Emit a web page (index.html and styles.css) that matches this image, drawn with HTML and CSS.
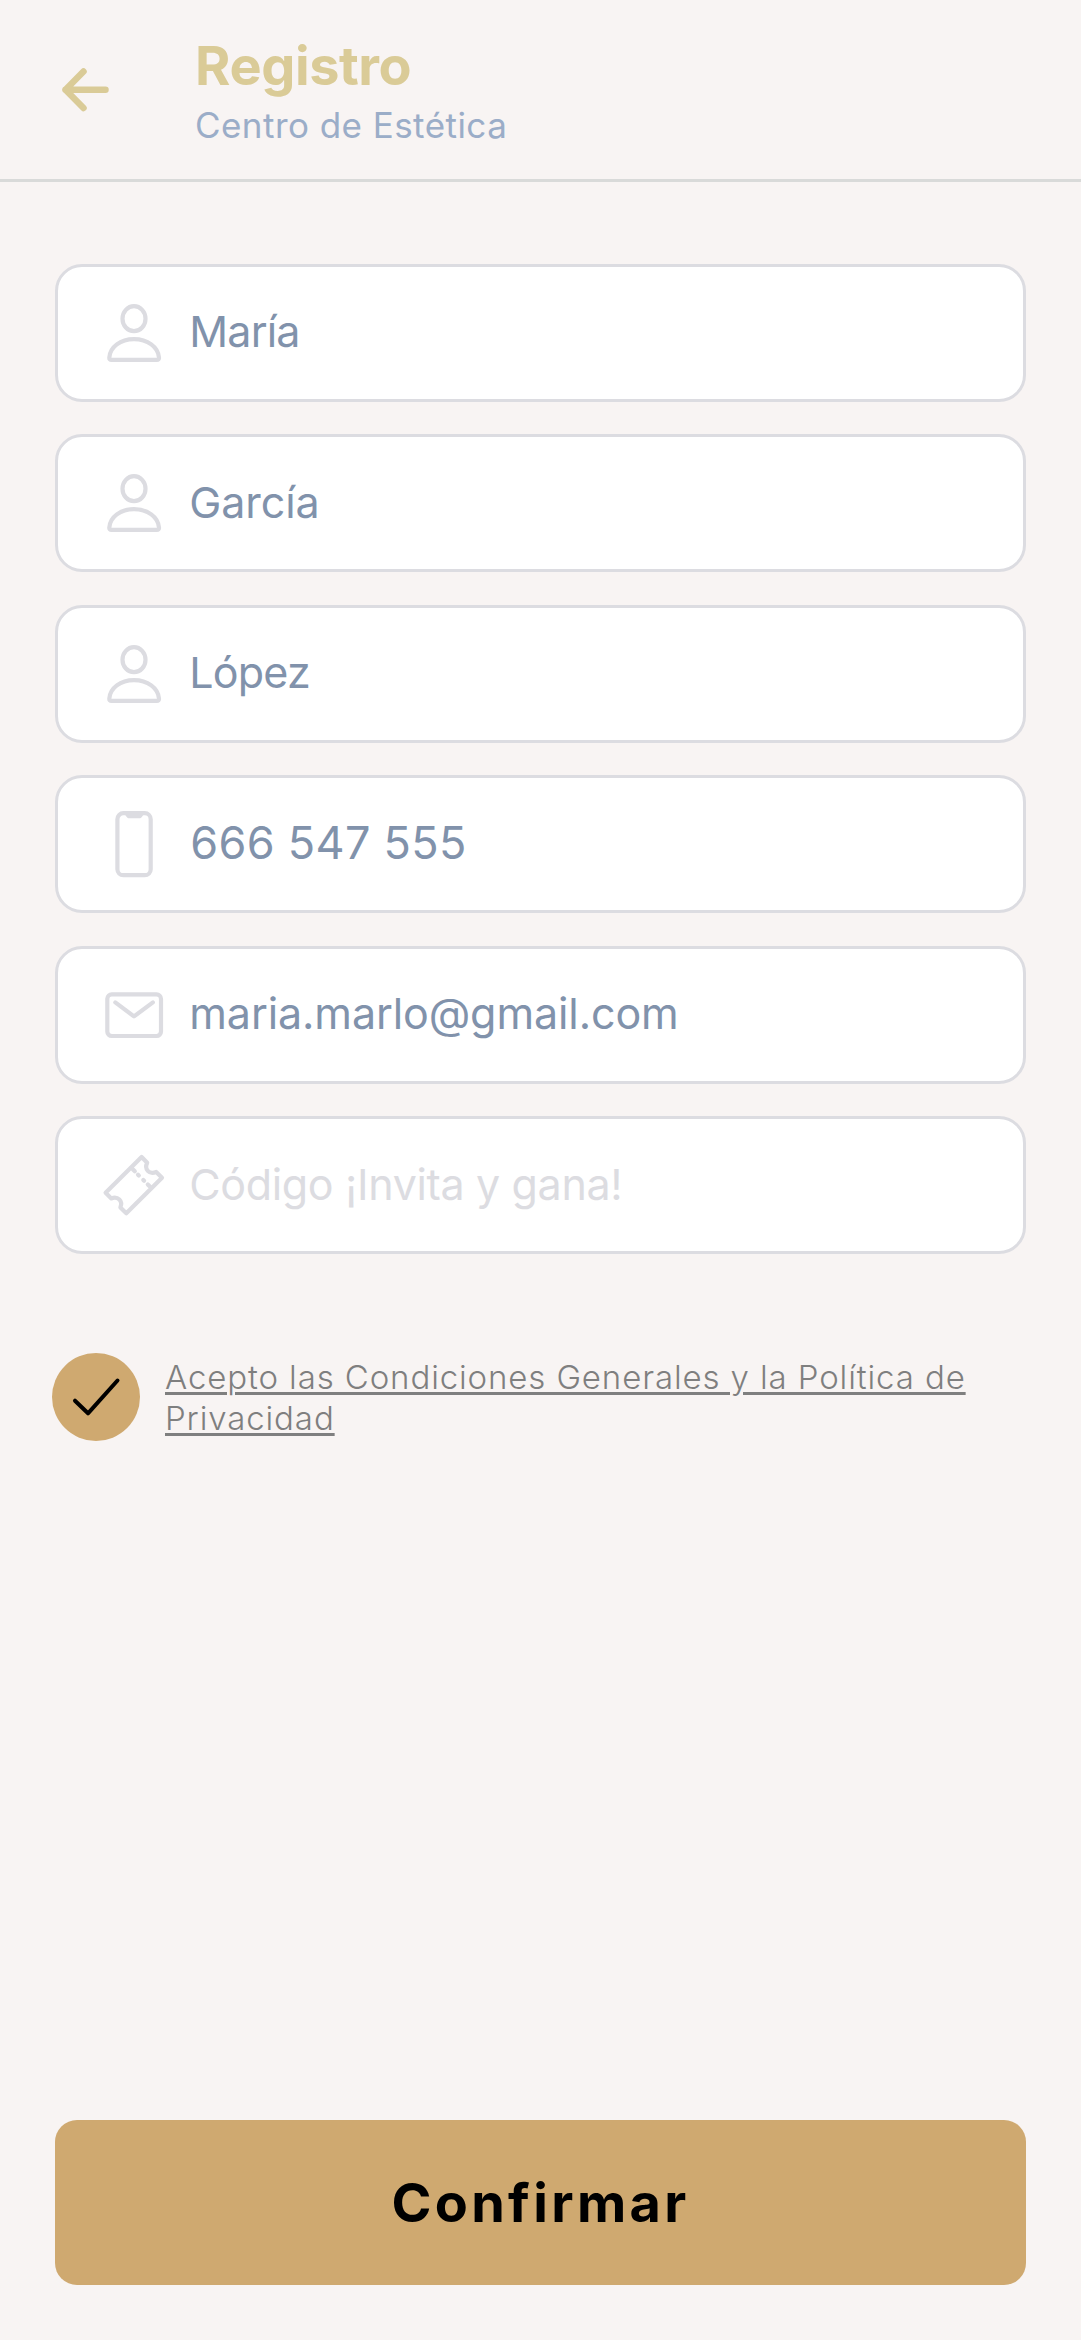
FILE: index.html
```html
<!DOCTYPE html>
<html lang="es">
<head>
<meta charset="utf-8">
<title>Registro</title>
<link rel="stylesheet" href="styles.css">
</head>
<body>
<svg class="defs" aria-hidden="true">
  <symbol id="user" viewBox="0 0 64 64"><ellipse cx="32" cy="17.700" rx="11.500" ry="12.500"/><path d="M7.300 56.600C8 46 18.500 38.200 32 38.200S56.200 46 57 56.600q.2 2.300-2.200 2.300H9.500q-2.400 0-2.200-2.300z"/></symbol>
</svg>
<header class="header">
  <svg class="back" viewBox="0 0 48 44"><path d="M43.500 21.700H3.500M21.500 3.500 3.500 21.700 21.500 40"/></svg>
  <div class="heading">
    <h1 class="title">Registro</h1>
    <p class="subtitle">Centro de Estética</p>
  </div>
</header>
<main class="main">
  <form class="form">
    <div class="field"><svg class="icon"><use href="#user"/></svg><span class="value short">María</span></div>
    <div class="field"><svg class="icon"><use href="#user"/></svg><span class="value">García</span></div>
    <div class="field"><svg class="icon"><use href="#user"/></svg><span class="value short">López</span></div>
    <div class="field"><svg class="icon" viewBox="0 0 64 64"><rect x="15.400" y="1.200" width="33.300" height="62" rx="6"/><path class="solid" d="M22 2h20.600c-2 .5-2 4.300-5.500 4.300h-9.600C24 6.300 24 2.500 22 2z"/></svg><span class="value phone">666 547 555</span></div>
    <div class="field"><svg class="icon" viewBox="0 0 64 64"><rect x="5.300" y="11.300" width="53.700" height="41.700" rx="4.500"/><path d="M13.300 19.400 32 33.400 50.900 19.400"/></svg><span class="value">maria.marlo@gmail.com</span></div>
    <div class="field"><svg class="icon" viewBox="0 0 64 64"><path d="M39.600 4 45.200 9.800C42 16 47 22 54.200 19L60 24.700 24.300 60.300 18.400 54.400C21 48 16 43 9.300 45.400L3.600 39.800zM31 16.500l1.800 1.800M36 21.700l.8.800M41.300 27l.8.800M45.800 31.500l1.800 1.800"/></svg><span class="value placeholder">Código ¡Invita y gana!</span></div>
  </form>
  <label class="terms">
    <svg class="check" viewBox="0 0 88 88"><circle cx="44" cy="44" r="44"/><path d="M23 47.700 36 60.300 65.500 27.500"/></svg>
    <a class="link">Acepto las Condiciones Generales y la Política de<br>Privacidad</a>
  </label>
</main>
<button class="confirm">Confirmar</button>
</body>
</html>
```
FILE: styles.css
```css
* { box-sizing: border-box; }
body {
  margin: 0;
  height: 2340px;
  display: flex;
  flex-direction: column;
  background: #f8f4f3;
  font-family: Inter, sans-serif;
}
.defs { display: none; }
.header {
  height: 181.500px;
  display: flex;
  align-items: flex-start;
  border-bottom: 3px solid #d9dad9;
}
.back {
  width: 48px;
  height: 44px;
  margin: 67.500px 85px 0 62px;
  fill: none;
  stroke: #dacb97;
  stroke-width: 6.500;
  stroke-linecap: round;
  stroke-linejoin: round;
}
.heading { padding-top: 32px; white-space: nowrap; }
.title {
  margin: 0;
  font-size: 54px;
  line-height: 68px;
  font-weight: 700;
  letter-spacing: -0.400px;
  color: #dacb97;
}
.subtitle {
  margin: 0;
  padding-top: 4px;
  font-size: 35px;
  line-height: 42px;
  font-weight: 400;
  letter-spacing: 0.450px;
  color: #9badc8;
}
.main { flex: 1; padding: 82.500px 55px 0; }
.form { display: flex; flex-direction: column; gap: 32.900px; }
.field {
  height: 137.600px;
  display: flex;
  align-items: center;
  gap: 23px;
  padding-left: 44.300px;
  background: #fff;
  border: 3px solid #dcdce1;
  border-radius: 27px;
}
.icon {
  width: 64px;
  height: 64px;
  overflow: visible;
  fill: none;
  stroke: #dcdce1;
  stroke-width: 4.200;
  stroke-linecap: round;
  stroke-linejoin: round;
}
.solid { fill: #dcdce1; stroke: none; }
.value {
  padding-bottom: 3px;
  font-size: 43px;
  line-height: 52px;
  letter-spacing: -0.100px;
  color: #8192ab;
  white-space: nowrap;
}
.short { letter-spacing: -0.800px; }
.phone { padding-left: 1px; font-size: 45px; letter-spacing: 0.300px; }
.placeholder { letter-spacing: -0.350px; color: #dcdce1; }
.terms { display: flex; margin: 99px 0 0 -3px; }
.check { width: 88px; height: 88px; fill: #cfa970; }
.check path {
  fill: none;
  stroke: #000;
  stroke-width: 4;
  stroke-linecap: round;
  stroke-linejoin: round;
}
.link {
  margin: 4px 0 0 25px;
  font-size: 33px;
  line-height: 41px;
  font-weight: 300;
  letter-spacing: 0.880px;
  color: #7f7f7f;
  white-space: nowrap;
  text-decoration: underline;
  text-decoration-thickness: 2.500px;
  text-underline-offset: 3px;
}
.confirm {
  height: 165.300px;
  margin: 0 55px 54.700px;
  border: 0;
  border-radius: 22px;
  background: #cfa970;
  color: #000;
  font: 700 54px Inter, sans-serif;
  letter-spacing: 3.300px;
}
```
